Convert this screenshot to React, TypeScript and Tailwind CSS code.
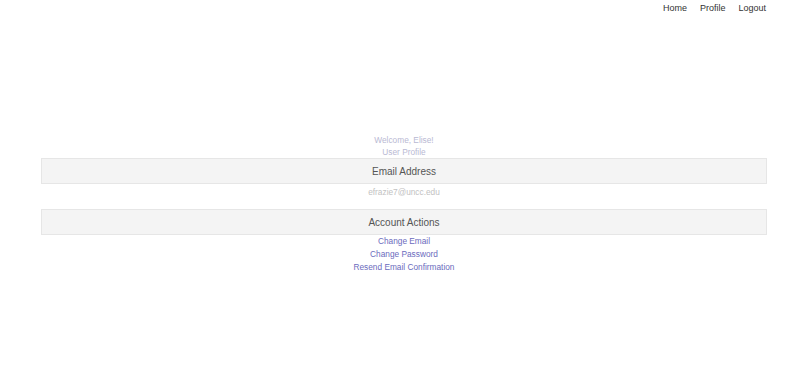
export default function App() {
  return (
    <div className="min-h-[376px] bg-white font-['Liberation_Sans',Arial,sans-serif]">
      <nav className="flex justify-end gap-[13px] pr-[40px] pt-[2px] text-[9px] text-[#333]">
        <a>Home</a>
        <a>Profile</a>
        <a>Logout</a>
      </nav>
      <div className="pl-[41px] pr-[39px] pt-[118px] text-center">
        <div className="text-[8.3px] leading-[12px] text-[#b9b9d3]">Welcome, Elise!</div>
        <div className="text-[8.3px] leading-[12px] text-[#b9b9d3]">User Profile</div>
        <div className="flex h-[26px] items-center justify-center border border-[#e6e6e6] bg-[#f4f4f4] pt-[1px] text-[10px] text-[#555]">
          Email Address
        </div>
        <div className="pt-[1px] text-[8.3px] leading-[14px] text-[#c2c2c2]">efrazie7@uncc.edu</div>
        <div className="mt-[10px] flex h-[26px] items-center justify-center border border-[#e6e6e6] bg-[#f4f4f4] pt-[1px] text-[10px] text-[#555]">
          Account Actions
        </div>
        <div className="flex flex-col items-center text-[8.3px] leading-[13px] text-[#6b6bbd]">
          <a>Change Email</a>
          <a>Change Password</a>
          <a>Resend Email Confirmation</a>
        </div>
      </div>
    </div>
  );
}
